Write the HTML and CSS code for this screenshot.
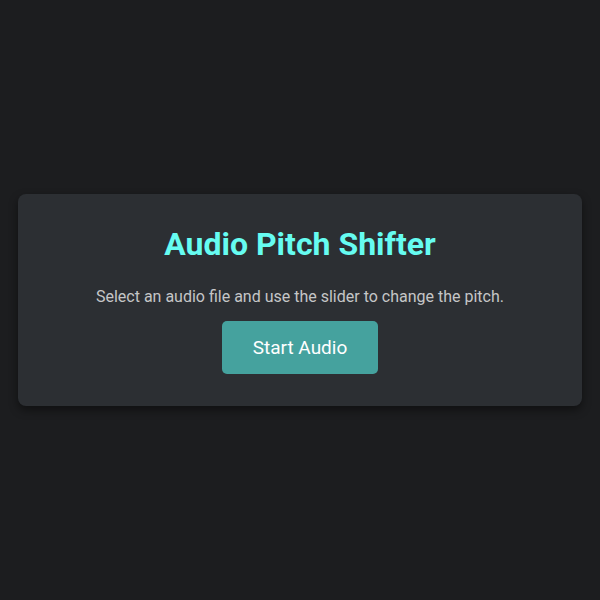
FILE: index.html
```html
<!DOCTYPE html>
<html>
<head>
<meta charset="utf-8">
<link rel="stylesheet" href="styles.css">
</head>
<body>
<div class="card">
  <h1 class="title">Audio Pitch Shifter</h1>
  <p class="desc">Select an audio file and use the slider to change the pitch.</p>
  <button class="start">Start Audio</button>
</div>
</body>
</html>
```
FILE: styles.css
```css
html, body {
  margin: 0;
  height: 100%;
}
body {
  background: #1c1d1f;
  font-family: Roboto, "Noto Sans", sans-serif;
  display: flex;
  align-items: center;
  justify-content: center;
}
.card {
  width: 564px;
  box-sizing: border-box;
  background: #2c2f33;
  border-radius: 8px;
  box-shadow: 0 4px 10px rgba(0,0,0,0.45);
  padding: 31px 20px 32px;
  display: flex;
  flex-direction: column;
  align-items: center;
}
.title {
  margin: 0 0 24px;
  font-size: 32px;
  line-height: 38px;
  font-weight: 700;
  color: #66fcf1;
}
.desc {
  margin: 0 0 15px;
  font-size: 16px;
  line-height: 19px;
  color: #c5c6c7;
}
.start {
  width: 156px;
  height: 53px;
  border: none;
  border-radius: 5px;
  background: #45a29e;
  color: #ffffff;
  font-family: Roboto, "Noto Sans", sans-serif;
  font-size: 19px;
  padding: 0;
}
```
